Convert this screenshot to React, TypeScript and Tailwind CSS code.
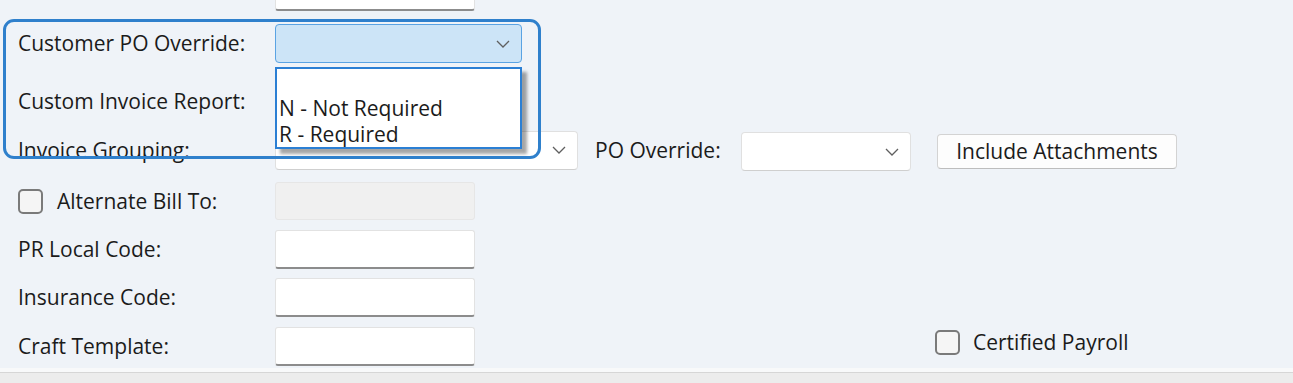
import type { ReactNode } from "react";

const font = { fontFamily: '"Open Sans", "Noto Sans", sans-serif' };

function Chevron() {
    return (
        <svg width="14" height="8" viewBox="0 0 14 8" className="shrink-0">
            <path d="M1 1 L7 7 L13 1" fill="none" stroke="#5f5f5f" strokeWidth="1.3" />
        </svg>
    );
}

function TextBox({ disabled = false }: { disabled?: boolean }) {
    if (disabled) {
        return <div className="w-[200px] h-[38px] shrink-0 rounded-[3px] border border-[#e6e6e6] bg-[#f0f0f0]" />;
    }
    return (
        <div className="w-[200px] h-[39px] shrink-0 rounded-[3px] border border-[#e2e2e2] border-b-2 border-b-[#8c8c8c] bg-white" />
    );
}

function Combo({ width, active = false }: { width: string; active?: boolean }) {
    return (
        <div
            className={
                active
                    ? `${width} h-[39px] shrink-0 rounded-[4px] border border-[#5aa3e3] bg-[#cce4f7] flex items-center justify-end pr-[11px]`
                    : `${width} h-[39px] shrink-0 rounded-[4px] border border-[#e0e0e0] border-b-[#cfcfcf] bg-white flex items-center justify-end pr-[11px]`
            }
        >
            <Chevron />
        </div>
    );
}

function Label({ children }: { children: ReactNode }) {
    return <div className="w-[275px] pl-[18px] shrink-0 whitespace-nowrap">{children}</div>;
}

function CheckBox() {
    return <div className="w-[25px] h-[25px] rounded-[5px] border-2 border-[#7a7a7a] bg-[#f5f5f5] shrink-0" />;
}

export default function App() {
    return (
        <div className="relative w-[1293px] h-[383px] overflow-hidden bg-[#eff3f8] text-[#1b1b1b] text-[21px] leading-none" style={font}>
            <div className="flex flex-col">
                <div className="h-[11px] overflow-hidden flex items-end">
                    <div className="ml-[275px] w-[200px] h-[30px] rounded-[3px] border border-[#e2e2e2] border-b-2 border-b-[#8c8c8c] bg-white" />
                </div>

                <div className="mt-[13px] h-[39px] flex items-center">
                    <Label>Customer PO Override:</Label>
                    <Combo width="w-[247px]" active />
                </div>

                <div className="mt-[19px] h-[38px] flex items-center">
                    <Label>Custom Invoice Report:</Label>
                    <Combo width="w-[247px]" />
                </div>

                <div className="mt-[10px] h-[40px] flex items-center">
                    <Label>Invoice Grouping:</Label>
                    <Combo width="w-[303px]" />
                    <div className="ml-[17px] w-[146px] shrink-0 whitespace-nowrap">PO Override:</div>
                    <div className="mt-[3px]">
                        <Combo width="w-[170px]" />
                    </div>
                    <button className="ml-[26px] mt-[2px] w-[240px] h-[35px] shrink-0 rounded-[4px] border border-[#d3d3d3] border-b-[#bdbdbd] bg-[#fdfdfd] text-[21px] leading-none">
                        Include Attachments
                    </button>
                </div>

                <div className="mt-[12px] h-[38px] flex items-center">
                    <div className="w-[275px] pl-[18px] flex items-center gap-[14px] shrink-0 whitespace-nowrap">
                        <CheckBox />
                        <span>Alternate Bill To:</span>
                    </div>
                    <TextBox disabled />
                </div>

                <div className="mt-[10px] h-[39px] flex items-center">
                    <Label>PR Local Code:</Label>
                    <TextBox />
                </div>

                <div className="mt-[9px] h-[39px] flex items-center">
                    <Label>Insurance Code:</Label>
                    <TextBox />
                </div>

                <div className="mt-[10px] h-[39px] flex items-center">
                    <Label>Craft Template:</Label>
                    <TextBox />
                    <div className="ml-[460px] -mt-[8px] flex items-center gap-[13px] whitespace-nowrap">
                        <CheckBox />
                        <span>Certified Payroll</span>
                    </div>
                </div>

                <div className="mt-[2px] h-[4px] bg-[#f8f9fa]" />
                <div className="h-[1px] bg-[#d6d6d6]" />
                <div className="h-[20px] bg-[#ececec]" />
            </div>

            {/* open dropdown list */}
            <div className="absolute left-[275px] top-[67px] w-[247px] h-[82px] border-2 border-[#2b7fd4] bg-white shadow-[5px_5px_3px_rgba(0,0,0,0.35)]">
                <div className="h-[26px]" />
                <div className="h-[26px] pl-[2px] flex items-center whitespace-nowrap">N - Not Required</div>
                <div className="h-[26px] pl-[2px] flex items-center whitespace-nowrap">R - Required</div>
            </div>

            {/* highlight frame */}
            <div className="absolute left-[3px] top-[19px] w-[538px] h-[140px] rounded-[11px] border-[3px] border-[#2f80cc] pointer-events-none" />
        </div>
    );
}
